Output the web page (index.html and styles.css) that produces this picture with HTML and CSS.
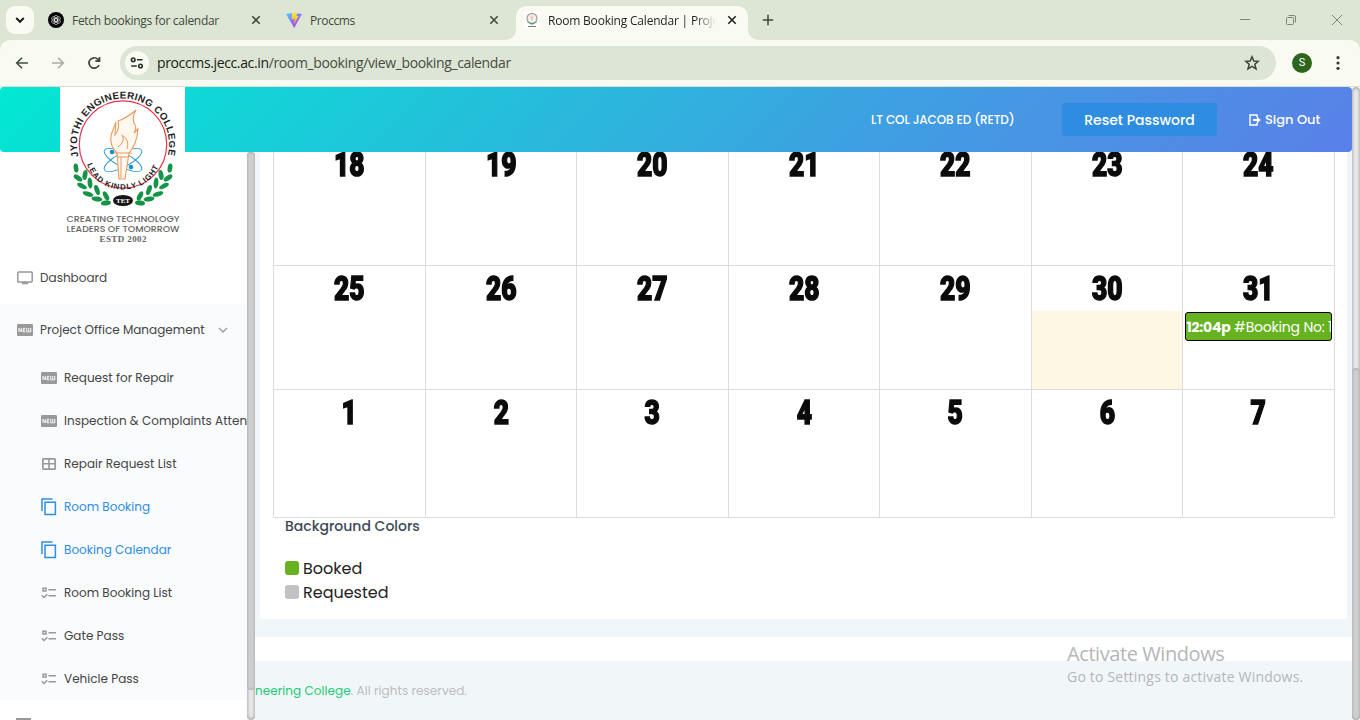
FILE: index.html
```html
<!DOCTYPE html>
<html lang="en">
<head>
<meta charset="utf-8">
<title>Room Booking Calendar</title>
<link rel="stylesheet" href="styles.css">
</head>
<body>
<svg class="defs" width="0" height="0">
  <defs>
    <symbol id="new" viewBox="0 0 16 12"><rect width="16" height="12" rx="1.2" fill="#999"/><path d="M2 8V4.2L4.4 8V4.2M8.4 4.3H6.2V7.9H8.4M6.2 6.1H8.1M9.8 4V7.8H13.8V4M11.8 4V7.5" fill="none" stroke="#f8f8f8" stroke-width="1"/></symbol>
    <symbol id="copy" viewBox="0 0 16 18"><path d="M1 13V1H11.5M4 4.2H14.4V16.4H4Z" fill="none" stroke="#2f8ee0" stroke-width="1.5"/></symbol>
    <symbol id="list" viewBox="0 0 16 12"><path d="M2 1.2H5V4H2ZM7.5 2.7H15M7.5 8.7H15M.8 8.3L3 10.5L6.3 7.2" fill="none" stroke="#999" stroke-width="1.5"/></symbol>
    <symbol id="x" viewBox="0 0 10 10"><path d="M1.3 1.3L8.7 8.7M8.7 1.3L1.3 8.7" fill="none" stroke="currentColor" stroke-width="1.6"/></symbol>
  </defs>
</svg>

<div class="tabs">
  <div class="tab-search"><svg width="10" height="8" viewBox="0 0 10 8"><path d="M1.2 2L5 5.8L8.8 2" fill="none" stroke="#1b1f18" stroke-width="2"/></svg></div>
  <div class="tab tab-a">
    <svg width="16" height="16" viewBox="0 0 16 16"><circle cx="8" cy="8" r="8" fill="#050505"/><g fill="none" stroke="#ddd" stroke-width=".6"><ellipse cx="8" cy="6.4" rx="2.1" ry="3.2"/><ellipse cx="8" cy="6.4" rx="2.1" ry="3.2" transform="rotate(60 8 8)"/><ellipse cx="8" cy="6.4" rx="2.1" ry="3.2" transform="rotate(120 8 8)"/><ellipse cx="8" cy="6.4" rx="2.1" ry="3.2" transform="rotate(180 8 8)"/><ellipse cx="8" cy="6.4" rx="2.1" ry="3.2" transform="rotate(240 8 8)"/><ellipse cx="8" cy="6.4" rx="2.1" ry="3.2" transform="rotate(300 8 8)"/></g></svg>
    <span class="tab-name name-a">Fetch bookings for calendar</span>
    <svg class="x" width="10" height="10"><use href="#x"/></svg>
  </div>
  <div class="tab tab-b">
    <svg width="16" height="16" viewBox="0 0 16 16"><defs><linearGradient id="v" x2=".7" y2="1"><stop stop-color="#41d1ff"/><stop offset="1" stop-color="#bd34fe"/></linearGradient><linearGradient id="bolt" y2="1" x2="0"><stop stop-color="#ffe95a"/><stop offset="1" stop-color="#ffa800"/></linearGradient></defs><path d="M0 2L8 .8L16 2L8.2 16Z" fill="url(#v)"/><path d="M6 .8L11.4 0L10.4 4H12.6L8 12.2L8.6 7H5.6Z" fill="url(#bolt)"/></svg>
    <span class="tab-name name-b">Proccms</span>
    <svg class="x" width="10" height="10"><use href="#x"/></svg>
  </div>
  <div class="tab active">
    <svg width="16" height="16" viewBox="0 0 16 16"><rect width="16" height="16" fill="#fff"/><circle cx="8" cy="6.3" r="5" fill="#f8efec" stroke="#a6a0a5" stroke-width="1.3"/><path d="M6.5 7Q5.8 4 8.8 3Q10 6 8.3 9" fill="#f2c9b6"/><path d="M3.3 9.5Q8 14 12.7 9.5" fill="none" stroke="#67b88d" stroke-width="1.4"/><path d="M4 14.5H12M6.5 11.8H9.5" stroke="#777" stroke-width="1"/></svg>
    <span class="tab-name name-c">Room Booking Calendar | Project</span>
    <svg class="x" width="10" height="10"><use href="#x"/></svg>
  </div>
  <svg class="plus" width="12" height="12" viewBox="0 0 12 12"><path d="M6 .8V11.2M.8 6H11.2" stroke="#3c4738" stroke-width="1.5"/></svg>
  <div class="win">
    <svg width="12" height="12" viewBox="0 0 12 12"><path d="M1 5.5H11" stroke="#7d8577"/></svg>
    <svg width="12" height="12" viewBox="0 0 12 12"><path d="M3.5 1.5H9Q10.5 1.5 10.5 3V8.5M2.5 3.5H7.5Q8.5 3.5 8.5 4.5V9.5Q8.5 10.5 7.5 10.5H2.5Q1.5 10.5 1.5 9.5V4.5Q1.5 3.5 2.5 3.5Z" fill="none" stroke="#7d8577"/></svg>
    <svg width="12" height="12" viewBox="0 0 12 12"><path d="M1 1L11 11M11 1L1 11" stroke="#7d8577"/></svg>
  </div>
</div>

<div class="toolbar-back"><div class="toolbar">
  <svg class="nav" width="14" height="14" viewBox="0 0 14 14"><path d="M13 7H2M7 1.7L1.7 7L7 12.3" fill="none" stroke="#41503d" stroke-width="1.6"/></svg>
  <svg class="nav fwd" width="14" height="14" viewBox="0 0 14 14"><path d="M1 7H12M7 1.7L12.3 7L7 12.3" fill="none" stroke="#a8aea3" stroke-width="1.6"/></svg>
  <svg class="nav" width="14" height="14" viewBox="0 0 14 14"><path d="M12 9A5.2 5.2 0 1 1 10.9 3.3L12.5 5M12.5 1V5.2H8.3" fill="none" stroke="#3b4737" stroke-width="1.7"/></svg>
  <div class="url">
    <span class="site"><svg width="14" height="14" viewBox="0 0 14 14"><g fill="none" stroke="#263023" stroke-width="1.6"><circle cx="3.2" cy="3.8" r="1.8"/><circle cx="10.5" cy="10" r="1.8"/><path d="M7 3.8H12.5M1.2 10H6.8"/></g></svg></span>
    <span class="address"><b>proccms.jecc.ac.in</b>/room_booking/view_booking_calendar</span>
    <svg class="star" width="16" height="16" viewBox="0 0 16 16"><path d="M8 1.8L9.8 6L14.2 6.3L10.8 9.2L12 13.8L8 11.3L4 13.8L5.2 9.2L1.8 6.3L6.2 6Z" fill="none" stroke="#3d4539" stroke-width="1.5"/></svg>
  </div>
  <span class="avatar">S</span>
  <svg width="4" height="14" viewBox="0 0 4 14"><g fill="#34402f"><circle cx="2" cy="1.7" r="1.6"/><circle cx="2" cy="7" r="1.6"/><circle cx="2" cy="12.3" r="1.6"/></g></svg>
</div></div>

<div class="page">
  <div class="app">
    <header class="head">
      <span class="user">LT COL JACOB ED (RETD)</span>
      <button class="reset"><span>Reset Password</span></button>
      <span class="signout"><svg width="12" height="12" viewBox="0 0 12 12"><path d="M8 3.2V1H1V11H8V8.8" fill="none" stroke="#fff" stroke-width="1.4"/><path d="M4 5H8V2.5L11.8 6L8 9.5V7H4Z" fill="#fff"/></svg><span>Sign Out</span></span>
      <svg class="logo" width="125" height="163" viewBox="0 0 125 163">
        <rect width="125" height="163" fill="#fff"/>
        <circle cx="63" cy="57.5" r="43.7" fill="none" stroke="#e9324d" stroke-width="1.2"/>
        <path d="M18.6 69.5A46 46 0 1 1 107.4 69.5" id="ring" fill="none"/>
        <text class="ring-text" textLength="167"><textPath href="#ring" textLength="167">JYOTHI ENGINEERING COLLEGE</textPath></text>
        <path d="M27 77Q36 102 63 102.500Q90 102 100 76" id="motto" fill="none"/>
        <g fill="none" stroke="#2497d4" stroke-width=".9"><ellipse cx="63" cy="73" rx="21" ry="7" transform="rotate(28 63 73)"/><ellipse cx="63" cy="73" rx="21" ry="7" transform="rotate(-28 63 73)"/></g>
        <path d="M59 92L57 66Q47 56 53 43L56 35L55 48Q60 42 58 34Q67 31 76 23Q71 31 75 38Q77 41 74 46L78 42Q77 57 69 66L65 92Z" fill="#fff8ee" stroke="#ed9a5e" stroke-width="1.1"/>
        <path d="M54 66H72M57 70H68M61 70V91M58 60Q66 54 62 48Q70 53 67 62" fill="none" stroke="#ed9a5e"/>
        <circle cx="52" cy="65" r="2.3" fill="#1390cf"/><circle cx="71" cy="80" r="2.3" fill="#1390cf"/>
        <text class="motto" textLength="92"><textPath href="#motto" textLength="92">LEAD KINDLY LIGHT</textPath></text>
        <g fill="#159447">
          <g id="laurel"><ellipse cx="16" cy="81" rx="2.4" ry="4.6" transform="rotate(-8 16 81)"/><ellipse cx="18" cy="91" rx="2.4" ry="5" transform="rotate(-55 18 91)"/><ellipse cx="25" cy="88" rx="2.4" ry="5" transform="rotate(10 25 88)"/><ellipse cx="22" cy="99" rx="2.4" ry="5.4" transform="rotate(-62 22 99)"/><ellipse cx="30" cy="96" rx="2.4" ry="5.4" transform="rotate(-5 30 96)"/><ellipse cx="28" cy="107" rx="2.4" ry="5.5" transform="rotate(-72 28 107)"/><ellipse cx="37" cy="103" rx="2.4" ry="5.2" transform="rotate(-20 37 103)"/><ellipse cx="37" cy="112" rx="2.4" ry="5.5" transform="rotate(-82 37 112)"/><ellipse cx="46" cy="109" rx="2.4" ry="5" transform="rotate(-28 46 109)"/><ellipse cx="46" cy="116" rx="2.4" ry="5" transform="rotate(-95 46 116)"/></g>
          <use href="#laurel" transform="matrix(-1 0 0 1 126 0)"/>
        </g>
        <ellipse cx="63" cy="113.500" rx="10" ry="5.500" fill="#151515"/><text class="tet" x="63" y="116.200" textLength="14" lengthAdjust="spacingAndGlyphs">TET</text>
        <g class="caption"><text x="63" y="134.500" textLength="113" lengthAdjust="spacingAndGlyphs">CREATING TECHNOLOGY</text><text x="63" y="145" textLength="113" lengthAdjust="spacingAndGlyphs">LEADERS OF TOMORROW</text><text class="estd" x="63" y="155" textLength="47">ESTD 2002</text></g>
      </svg>
    </header>
    <div class="body">
      <nav class="side">
        <div class="menu">
          <div class="item top"><svg width="16" height="14" viewBox="0 0 16 14"><path d="M1.5 1H14.5Q15.2 1 15.2 2V10Q15.2 11 14.5 11H1.5Q.8 11 .8 10V2Q.8 1 1.5 1ZM5 12.5H11" fill="none" stroke="#999" stroke-width="1.5"/></svg><span>Dashboard</span></div>
          <div class="group">
            <div class="item top"><svg width="16" height="12"><use href="#new"/></svg><span>Project Office Management</span><svg class="chev" width="10" height="6" viewBox="0 0 10 6"><path d="M1 1L5 5L9 1" fill="none" stroke="#999" stroke-width="1.3"/></svg></div>
            <div class="item"><svg width="16" height="12"><use href="#new"/></svg><span>Request for Repair</span></div>
            <div class="item"><svg width="16" height="12"><use href="#new"/></svg><span>Inspection &amp; Complaints Attended</span></div>
            <div class="item"><svg width="16" height="12" viewBox="0 0 16 12"><rect x="1.800" y=".8" width="12.400" height="10.400" rx="1" fill="none" stroke="#999" stroke-width="1.700"/><path d="M2 5.800H14M8 1V11" stroke="#999" stroke-width="1.600"/></svg><span>Repair Request List</span></div>
            <div class="item on"><svg width="16" height="18"><use href="#copy"/></svg><span>Room Booking</span></div>
            <div class="item on"><svg width="16" height="18"><use href="#copy"/></svg><span>Booking Calendar</span></div>
            <div class="item"><svg width="16" height="12"><use href="#list"/></svg><span>Room Booking List</span></div>
            <div class="item"><svg width="16" height="12"><use href="#list"/></svg><span>Gate Pass</span></div>
            <div class="item"><svg width="16" height="12"><use href="#list"/></svg><span>Vehicle Pass</span></div>
          </div>
          <div class="next"></div>
        </div>
        <div class="scroll side-scroll"><div class="thumb"></div></div>
      </nav>
      <main class="main">
        <section class="card">
          <div class="calendar">
            <div class="day"><b>18</b></div><div class="day"><b>19</b></div><div class="day"><b>20</b></div><div class="day"><b>21</b></div><div class="day"><b>22</b></div><div class="day"><b>23</b></div><div class="day"><b>24</b></div>
            <div class="day"><b>25</b></div><div class="day"><b>26</b></div><div class="day"><b>27</b></div><div class="day"><b>28</b></div><div class="day"><b>29</b></div><div class="day"><b>30</b><div class="today"></div></div><div class="day"><b>31</b><div class="event"><span><strong>12:04p</strong> #Booking No: 1</span></div></div>
            <div class="day"><b>1</b></div><div class="day"><b>2</b></div><div class="day"><b>3</b></div><div class="day"><b>4</b></div><div class="day"><b>5</b></div><div class="day"><b>6</b></div><div class="day"><b>7</b></div>
          </div>
          <div class="legend">
            <h6>Background Colors</h6>
            <div class="key"><i class="booked"></i><span>Booked</span></div>
            <div class="key"><i class="requested"></i><span>Requested</span></div>
          </div>
        </section>
        <div class="strip"></div>
        <footer class="foot"><span class="college">neering College</span>. All rights reserved.</footer>
      </main>
    </div>
  </div>
  <div class="scroll page-scroll"><div class="thumb"></div></div>
  <div class="activate"><div class="a1">Activate Windows</div><div class="a2">Go to Settings to activate Windows.</div></div>
</div>
</body>
</html>
```

FILE: styles.css
```css
* { box-sizing: border-box; }
body { margin: 0; width: 1360px; height: 720px; overflow: hidden; display: flex; flex-direction: column; background: #fff; font-family: Poppins, Inter, sans-serif; }
svg { flex: none; display: block; }
.defs { position: absolute; }
span { white-space: nowrap; }

/* browser chrome */
.tabs { height: 40px; flex: none; background: #dde5d4; display: flex; align-items: center; font-family: "Segoe UI", "Open Sans", sans-serif; font-size: 12px; color: #414a3c; }
.tab-search { width: 28px; height: 28px; margin-left: 6px; border-radius: 9px; background: #f9fbf2; display: flex; align-items: center; justify-content: center; }
.tab { display: flex; align-items: center; gap: 8px; }
.tab-a { width: 238px; padding: 0 11px 0 14px; }
.tab-b { width: 244px; padding: 0 17px 0 14px; }
.tab .x { margin-left: auto; }
.active { position: relative; width: 232px; height: 34px; margin-top: 6px; padding: 0 11px 6px 8px; border-radius: 10px 10px 0 0; background: #f9fbf2; color: #1e231b; }
.active::before, .active::after { content: ""; position: absolute; bottom: 0; width: 10px; height: 10px; }
.active::before { left: -10px; background: radial-gradient(circle at 0 0, transparent 9.5px, #f9fbf2 10px); }
.active::after { right: -10px; background: radial-gradient(circle at 100% 0, transparent 9.5px, #f9fbf2 10px); }
.name-a { letter-spacing: -.3px; }
.name-b { letter-spacing: -.4px; }
.name-c { width: 168px; overflow: hidden; letter-spacing: -.2px; -webkit-mask-image: linear-gradient(90deg, #000 88%, transparent 100%); }
.plus { margin-left: 14px; }
.win { margin-left: auto; padding-right: 17px; display: flex; gap: 34px; }
.toolbar-back { flex: none; background: #dde5d4; }
.toolbar { height: 47px; padding: 0 20px 1px 15px; border-radius: 10px 10px 0 0; border-bottom: 1px solid #dadfd2; background: #f9fbf2; display: flex; align-items: center; }
.nav { margin-right: 22px; }
.nav:nth-child(3) { margin-right: 19px; }
.url { width: 1156px; height: 34px; margin-right: 16px; padding: 0 16px 0 5px; border-radius: 17px; background: #dde5d6; display: flex; align-items: center; }
.site { width: 24px; height: 24px; border-radius: 50%; background: #f9fbf2; display: flex; align-items: center; justify-content: center; }
.address { margin-left: 8px; font: 14px "Segoe UI", "Open Sans", sans-serif; letter-spacing: -.365px; color: #454e40; }
.address b { font-weight: 400; color: #171c14; }
.star { margin-left: auto; }
.avatar { width: 20px; height: 20px; margin-right: 24px; border-radius: 50%; background: #2d651d; color: #fff; font: 11px/20px Roboto, sans-serif; text-align: center; }

/* application */
.page { position: relative; flex: 1; min-height: 0; display: flex; }
.app { width: 1352px; display: flex; flex-direction: column; }
.head { position: relative; z-index: 2; height: 65px; flex: none; display: flex; align-items: center; padding-left: 871px; border-radius: 4px; background: linear-gradient(135deg, #01e8d3, #26bddb 38%, #439ae3 70%, #5a80e8); color: #fff; }
.user { width: 191px; font-size: 12px; font-weight: 500; letter-spacing: -.1px; }
.reset { width: 155px; height: 33px; padding: 2px 0 0; border: 0; border-radius: 3px; background: #2f8de1; color: #fff; font: 500 14px Poppins, Inter, sans-serif; }
.signout { display: flex; align-items: center; gap: 4px; margin-left: 32px; font-size: 13px; font-weight: 500; }
.logo { position: absolute; left: 60px; top: 0; font-family: "Liberation Sans", Arial, sans-serif; }
.ring-text { font-size: 9.8px; font-weight: 700; fill: #222; }
.motto { font-size: 7.8px; font-weight: 700; fill: #222; }
.tet { font: 700 7px "Liberation Serif", serif; fill: #fff; text-anchor: middle; }
.caption { font-family: Poppins, sans-serif; font-size: 9px; font-weight: 500; fill: #666; text-anchor: middle; }
.estd { font-family: "Liberation Serif", serif; font-weight: 700; }
.body { flex: 1; min-height: 0; display: flex; }
.side { width: 255px; height: 568px; display: flex; background: #fff; }
.menu { width: 247px; padding-top: 100px; overflow: hidden; }
.item { height: 43px; padding-left: 41px; display: flex; align-items: center; gap: 7px; font-size: 12px; letter-spacing: .02px; color: #444; }
.item.top { height: 52px; padding-left: 17px; }
.item.on { color: #2f8ee0; }
.group { height: 396px; background: #f9fbfd; }
.chev { margin-left: 6px; }
.next { width: 15px; height: 4px; margin: 18px 0 0 16px; background: #999; }
.scroll { width: 8px; flex: none; background: #eee; border-radius: 5px; box-shadow: inset 0 0 4px #888; }
.thumb { background: #cfcfcf; border-radius: 4px; box-shadow: inset 0 0 3px #999; }
.side-scroll .thumb { height: 538px; }
.page-scroll { padding-top: 281px; }
.page-scroll .thumb { height: 352px; }
.main { width: 1097px; height: 568px; overflow: hidden; background: #f1f6f9; }
.card { width: 1087px; height: 467px; margin-left: 5px; padding: 0 12px 0 13px; overflow: hidden; background: #fff; border-radius: 0 0 2px 2px; }
.calendar { width: 1062px; margin-top: -10px; display: grid; grid-template-columns: repeat(7, 1fr); grid-template-rows: 124px 124px 128px; border-left: 1px solid #ddd; }
.day { min-width: 0; border-right: 1px solid #ddd; border-bottom: 1px solid #ddd; }
.day b { display: block; height: 45px; font: 900 33px/45px Impact, Roboto, sans-serif; color: #0b0b0b; -webkit-text-stroke: 1.5px #0b0b0b; text-align: center; transform: scaleX(.8); }
.today { height: 78px; background: #fdf7e3; }
.event { height: 29px; margin: 1px 2px; border: 1px solid #000; border-radius: 3px; overflow: hidden; background: #66b221; color: #fff; font-size: 14px; line-height: 28px; }
.event span { letter-spacing: -.2px; }
.legend { padding-left: 12px; color: #222; }
.legend h6 { margin: 0; height: 38px; font-size: 14px; font-weight: 500; line-height: 17px; color: #3e4956; }
.key { height: 24px; display: flex; align-items: center; gap: 4px; font-size: 16px; }
.key i { width: 14px; height: 14px; border-radius: 3px; }
.booked { background: #66b221; }
.requested { background: #c2c2c2; }
.strip { height: 24px; margin-top: 18px; background: #fff; }
.foot { height: 59px; font-size: 12px; letter-spacing: .06px; line-height: 59px; color: #bdbdbd; }
.college { color: #1fc977; }
.activate { position: absolute; left: 1067px; top: 555px; font-family: "Segoe UI", "Open Sans", sans-serif; color: #b4b7b8; white-space: nowrap; }
.a1 { font-size: 20px; line-height: 24px; letter-spacing: -.42px; }
.a2 { font-size: 14px; line-height: 21px; letter-spacing: .2px; }
```
